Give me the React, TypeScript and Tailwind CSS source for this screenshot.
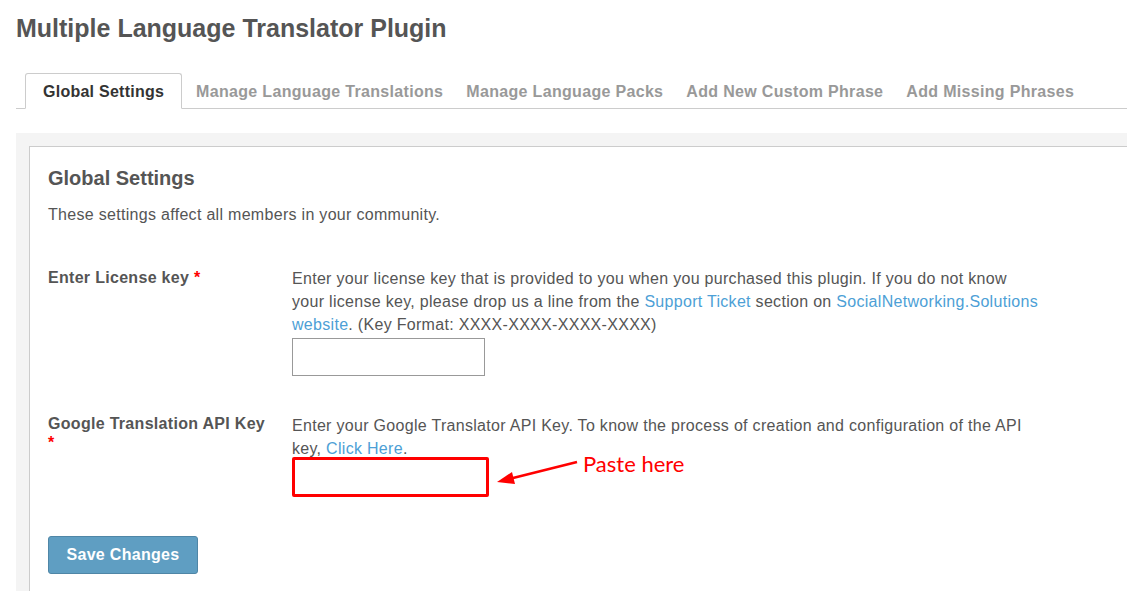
import React from 'react';

const tabs = [
  'Manage Language Translations',
  'Manage Language Packs',
  'Add New Custom Phrase',
  'Add Missing Phrases',
];

const App: React.FC = () => {
  return (
    <div className="min-h-screen w-[1127px] h-[591px] overflow-hidden bg-white pl-4 font-['Liberation_Sans',Arial,sans-serif] text-[#555]">
      {/* Page title */}
      <h1 className="pt-[13px] text-[25px] font-bold leading-[30px] text-[#555]">
        Multiple Language Translator Plugin
      </h1>

      {/* Tabs */}
      <div className="mt-[30px] flex items-end border-b border-[#ccc] pl-[9px]">
        <div className="-mb-px flex h-[36px] items-center rounded-t-[3px] border border-[#ccc] border-b-white bg-white px-[17px] pt-[2px] text-[16px] font-bold tracking-[0.25px] text-[#333]">
          Global Settings
        </div>
        <div className="flex h-[35px] items-center pl-[14px] pt-[2px]">
          {tabs.map((t) => (
            <span key={t} className="mr-[23px] text-[16px] font-bold tracking-[0.32px] text-[#999]">
              {t}
            </span>
          ))}
        </div>
      </div>

      {/* Settings panel */}
      <div className="mt-[24px] w-[1140px] bg-[#f4f4f4] pl-[13px] pt-[13px]">
        <div className="h-[500px] border border-r-0 border-[#ccc] bg-white pl-[18px] pt-[19px]">
          <h2 className="text-[20px] font-bold leading-[24px] text-[#555]">Global Settings</h2>
          <p className="mt-[15px] text-[16px] leading-[20px] tracking-[0.3px] text-[#555]">
            These settings affect all members in your community.
          </p>

          {/* License key */}
          <div className="mt-[41px] flex text-[16px] tracking-[0.3px]">
            <div className="w-[225px] font-bold leading-[23px] text-[#555]">
              Enter License key <span className="text-[#f00]">*</span>
            </div>
            <div className="ml-[19px] w-[749px] pt-[1px] leading-[23px] text-[#555]">
              Enter your license key that is provided to you when you purchased this plugin. If you do not know
              your license key, please drop us a line from the{' '}
              <span className="text-[#4d9fd6]">Support Ticket</span> section on{' '}
              <span className="text-[#4d9fd6]">SocialNetworking.Solutions website</span>. (Key Format: XXXX-XXXX-XXXX-XXXX)
              <div className="mt-[2px] h-[38px] w-[193px] border border-[#999] bg-white" />
            </div>
          </div>

          {/* Google API key */}
          <div className="mt-[38px] flex text-[16px] tracking-[0.3px]">
            <div className="w-[225px] font-bold leading-[19px] text-[#555]">
              Google Translation API Key <span className="text-[#f00]">*</span>
            </div>
            <div className="ml-[19px] w-[749px] leading-[23px] text-[#555]">
              Enter your Google Translator API Key. To know the process of creation and configuration of the API
              key, <span className="text-[#4d9fd6]">Click Here</span>.
              <div className="mt-[-3px] flex items-start">
                <div className="h-[40px] w-[197px] rounded-[2px] border-[3px] border-[#f00] bg-white" />
                <svg width="88" height="34" viewBox="0 0 88 34" className="ml-[8px] mt-[2px]">
                  <line x1="80" y1="3" x2="12" y2="20" stroke="#f00" strokeWidth="2.5" />
                  <polygon points="0,23 15,13 18,25" fill="#f00" />
                </svg>
                <span className="ml-[-2px] mt-[-6px] font-['Lato',sans-serif] text-[22px] leading-[26px] tracking-normal text-[#f00]">
                  Paste here
                </span>
              </div>
            </div>
          </div>

          {/* Save */}
          <button className="mt-[39px] h-[38px] w-[150px] rounded-[3px] border border-[#4f86a6] bg-[#5f9ec2] text-[16px] font-bold tracking-[0.3px] text-white">
            Save Changes
          </button>
        </div>
      </div>
    </div>
  );
};

export default App;
